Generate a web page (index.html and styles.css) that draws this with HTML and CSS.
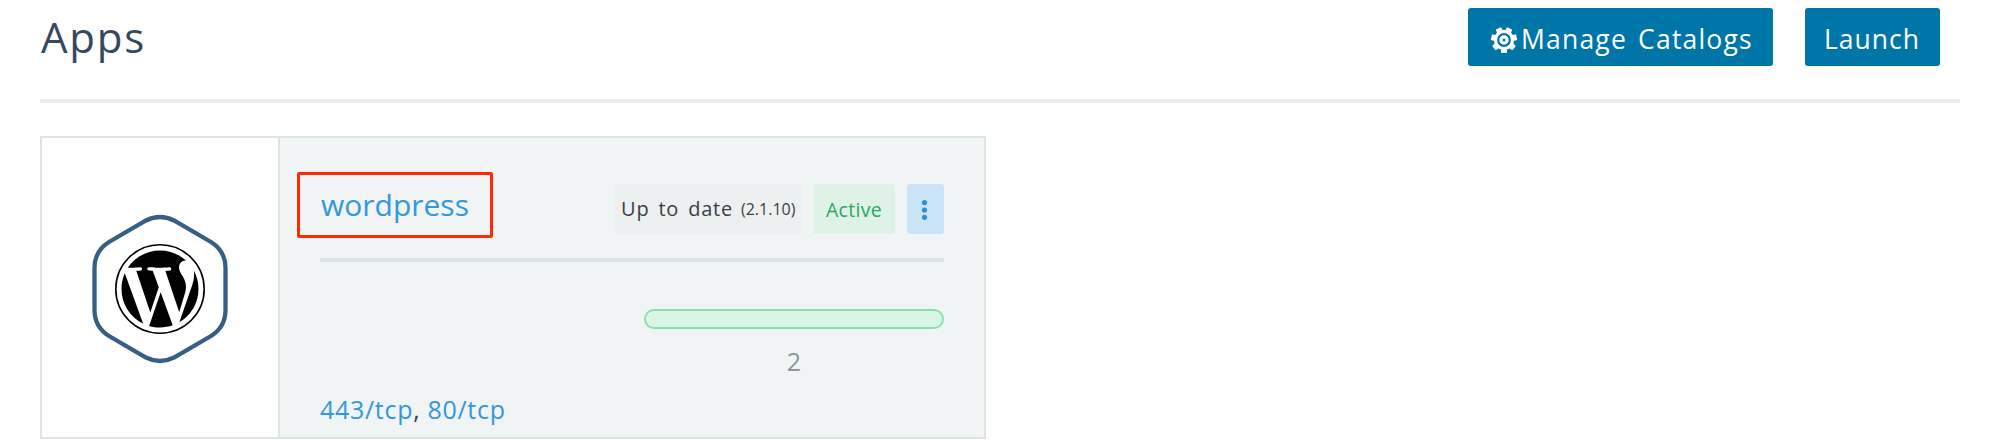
FILE: index.html
```html
<!DOCTYPE html>
<html lang="en">
<head>
<meta charset="utf-8">
<title>Apps</title>
<link rel="stylesheet" href="styles.css">
</head>
<body>
<header class="page-header">
  <h1 class="title">Apps</h1>
  <div class="actions">
    <button class="btn btn-manage"><svg class="gear" viewBox="-13 -13 26 26"><g fill="#fff"><circle r="10.2"/><rect x="-3" y="0" width="6" height="13" rx="1"/><rect x="-3" y="0" width="6" height="13" rx="1" transform="rotate(51.430)"/><rect x="-3" y="0" width="6" height="13" rx="1" transform="rotate(102.860)"/><rect x="-3" y="0" width="6" height="13" rx="1" transform="rotate(154.290)"/><rect x="-3" y="0" width="6" height="13" rx="1" transform="rotate(205.710)"/><rect x="-3" y="0" width="6" height="13" rx="1" transform="rotate(257.140)"/><rect x="-3" y="0" width="6" height="13" rx="1" transform="rotate(308.570)"/></g><circle r="5.800" fill="none" stroke="#0075a8" stroke-width="2.200"/><circle r="1.500" fill="#0075a8"/></svg><span>Manage Catalogs</span></button>
    <button class="btn btn-launch"><span>Launch</span></button>
  </div>
</header>
<main class="card">
  <div class="logo">
    <svg width="136" height="150" viewBox="0 0 136 150">
      <path d="M54 6.5Q68 -.5 82 6.5L119 28Q133.500 37 133.500 54V96Q133.500 113 119 122L82 143.500Q68 150.500 54 143.500L17 122Q2.500 113 2.500 96V54Q2.500 37 17 28Z" fill="none" stroke="#365f86" stroke-width="4.300"/>
      <g transform="translate(68 75) scale(3.57) translate(-12 -12)">
        <circle cx="12" cy="12" r="12.380" fill="none" stroke="#000" stroke-width=".45"/>
        <path d="M21.469 6.825c.84 1.537 1.318 3.3 1.318 5.175 0 3.979-2.156 7.456-5.363 9.325l3.295-9.527c.615-1.54.82-2.771.82-3.864 0-.405-.026-.78-.07-1.11m-7.981.105c.647-.03 1.232-.105 1.232-.105.582-.075.514-.93-.067-.899 0 0-1.755.135-2.88.135-1.064 0-2.85-.15-2.85-.15-.585-.03-.661.855-.075.885 0 0 .54.061 1.125.09l1.68 4.605-2.37 7.08L5.354 6.9c.649-.03 1.234-.1 1.234-.1.585-.075.516-.93-.065-.896 0 0-1.746.138-2.874.138-.2 0-.438-.008-.69-.015C4.911 3.15 8.235 1.215 12 1.215c2.809 0 5.365 1.072 7.286 2.833-.046-.003-.091-.009-.141-.009-1.06 0-1.812.923-1.812 1.914 0 .89.513 1.643 1.06 2.531.411.72.89 1.643.89 2.977 0 .915-.354 1.994-.821 3.479l-1.075 3.585-3.9-11.61.001.014zM12 22.784c-1.059 0-2.081-.153-3.048-.437l3.237-9.406 3.315 9.087c.024.053.05.101.078.149-1.12.393-2.325.609-3.582.609M1.211 12c0-1.564.336-3.05.935-4.39L7.29 21.709C3.694 19.96 1.212 16.271 1.211 12"/>
      </g>
    </svg>
  </div>
  <section class="info">
    <div class="info-head">
      <div class="name-box"><a class="name">wordpress</a></div>
      <div class="badges">
        <span class="badge version"><span class="state">Up to date</span><small>(2.1.10)</small></span>
        <span class="badge active"><span>Active</span></span>
        <button class="more"><svg width="37" height="50" viewBox="0 0 37 50" fill="#2e8fd4"><circle cx="17.500" cy="18.600" r="2.600"/><circle cx="17.500" cy="26" r="2.600"/><circle cx="17.500" cy="33.300" r="2.600"/></svg></button>
      </div>
    </div>
    <div class="scale"><div class="bar"></div><div class="count">2</div></div>
    <div class="ports"><a>443/tcp</a>, <a>80/tcp</a></div>
  </section>
</main>
</body>
</html>
```
FILE: styles.css
```css
* { box-sizing: border-box; }
body { margin: 0; padding: 0 40px; background: #fff; color: #3a3f42; font-family: "Open Sans", "Noto Sans", sans-serif; }
.page-header { display: flex; justify-content: space-between; align-items: flex-start; height: 103px; padding: 8px 20px 0 1px; border-bottom: 4px solid #e9efed; }
.title { margin: 1px 0 0; font-size: 42px; line-height: 56px; font-weight: 400; color: #34495e; letter-spacing: 1.8px; }
.actions { display: flex; gap: 32px; }
.btn { display: flex; align-items: center; height: 58px; border: 0; border-radius: 3px; background: #0075a8; color: #fff; font: 400 26.500px/58px "Open Sans", "Noto Sans", sans-serif; letter-spacing: 1.2px; padding: 3px 0 0; white-space: nowrap; }
.btn-manage { width: 305px; padding-left: 23px; gap: 4px; word-spacing: 3px; }
.btn-launch { width: 135px; padding-left: 19px; letter-spacing: 1px; }
.gear { width: 26px; height: 26px; flex: none; margin-top: 2px; }
.card { display: flex; width: 946px; height: 303px; margin-top: 33px; border: 2px solid #dce4e4; }
.logo { display: flex; flex: none; justify-content: center; align-items: center; width: 238px; border-right: 2px solid #dce4e4; padding: 3px 0 0; }
.info { flex: 1; background: #f0f4f5; padding: 34px 40px 0; }
.info-head { display: flex; justify-content: space-between; height: 90px; border-bottom: 4px solid #dce4e4; }
.name-box { width: 196px; height: 66px; margin-left: -23px; border: 3px solid #ff2a04; border-radius: 2px; padding-left: 21px; }
.name { font-size: 30px; line-height: 59px; color: #3497da; }
.badges { display: flex; align-items: flex-start; padding-top: 12px; }
.badge { display: flex; align-items: center; height: 50px; border-radius: 3px; white-space: nowrap; }
.version { width: 187px; height: 51px; margin-right: 11px; padding: 0 0 2px 6px; background: #ecf0f1; font-size: 20px; }
.state { width: 120px; letter-spacing: .8px; word-spacing: 3px; }
.version small { font-size: 16px; }
.active { width: 82px; margin-right: 12px; justify-content: center; background: #dff2e8; color: #27a85e; font-size: 19.500px; letter-spacing: .3px; }
.more { width: 37px; height: 50px; border: 0; border-radius: 3px; padding: 0; background: #cbe3f6; }
.more svg { display: block; }
.scale { width: 300px; margin: 47px 0 0 auto; }
.bar { height: 20px; border: 2px solid #86e2ac; border-radius: 10px; background: #daf5e6; }
.count { margin-top: 15px; font-size: 25px; line-height: 34px; text-align: center; color: #8b979c; }
.ports { margin-top: 14px; font-size: 25px; line-height: 34px; letter-spacing: .7px; white-space: nowrap; }
.ports a { color: #3497da; }
```
